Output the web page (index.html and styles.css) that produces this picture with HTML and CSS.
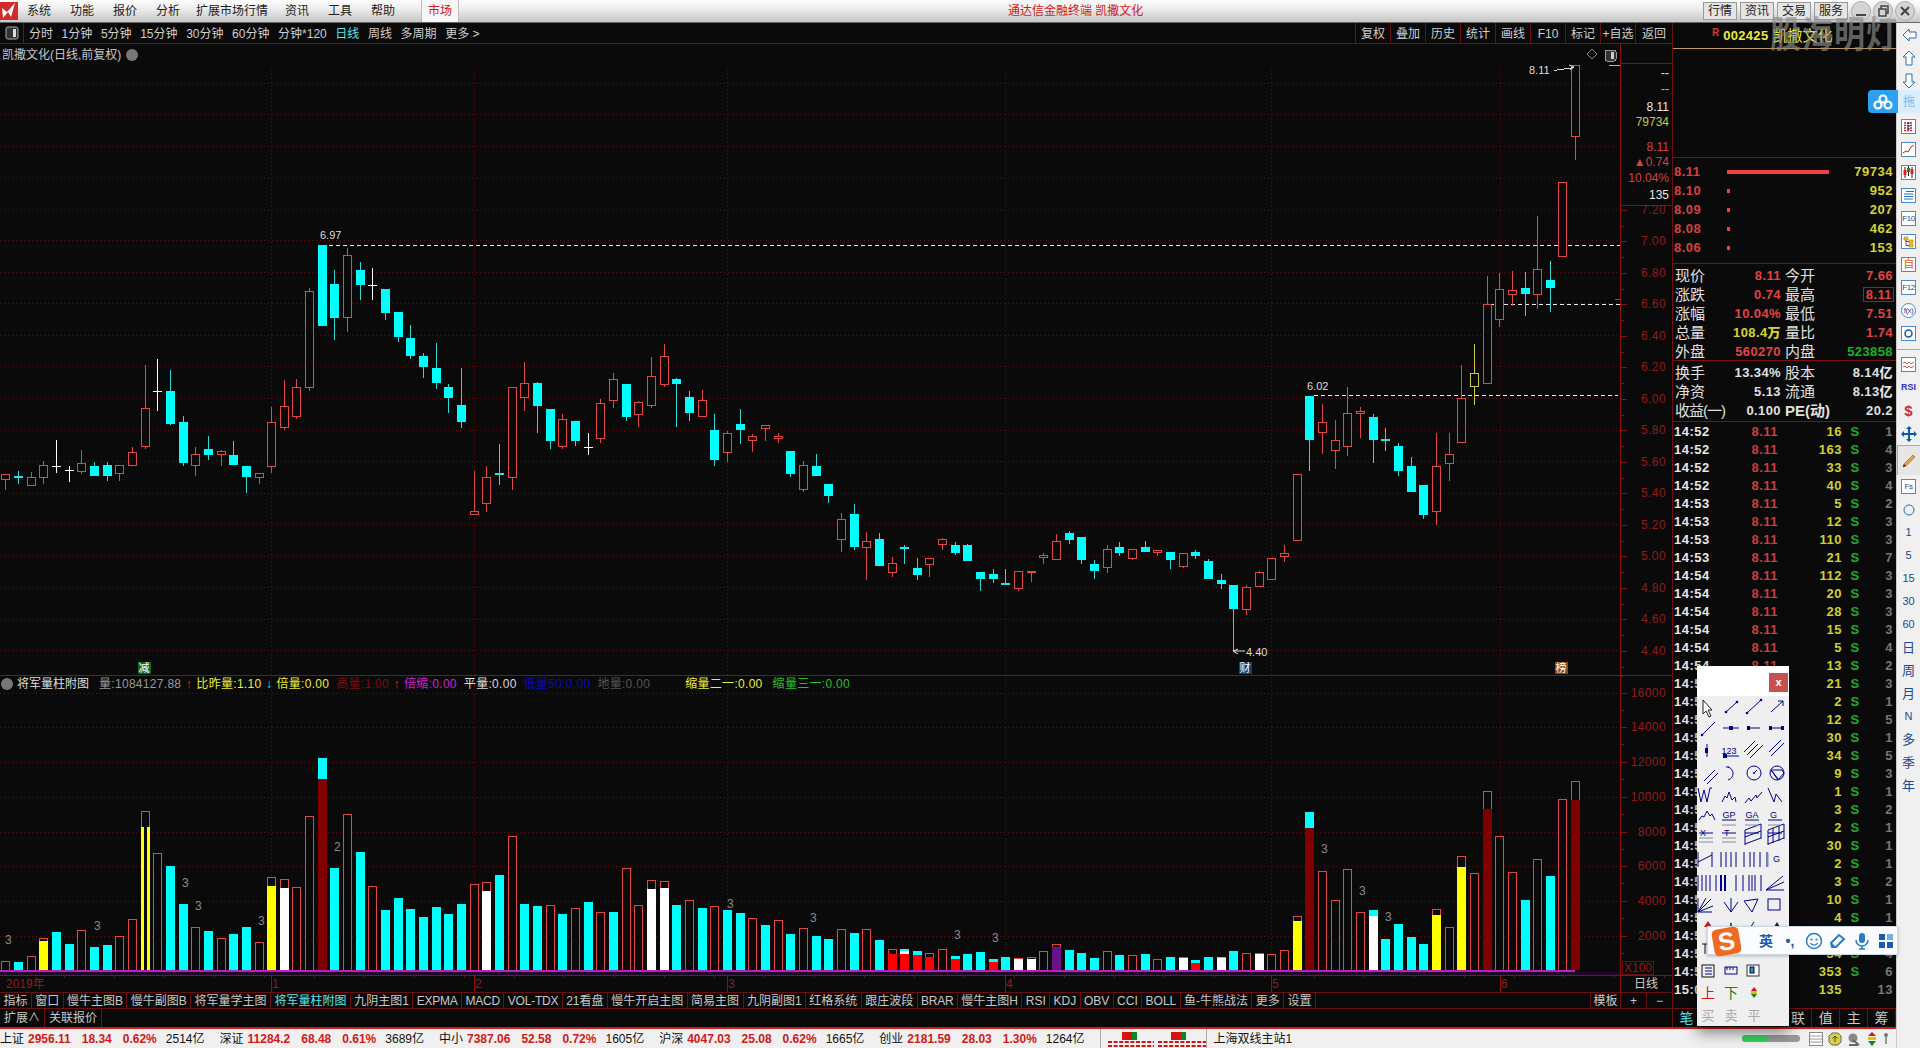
FILE: index.html
```html
<!DOCTYPE html>
<html lang="zh-CN">
<head>
<meta charset="utf-8">
<title>通达信金融终端 凯撒文化</title>
<link rel="stylesheet" href="styles.css">
</head>
<body>
<div class="app">
  <header class="titlebar">
    <svg class="logo" viewBox="0 0 18 18" width="18" height="18"><rect width="18" height="18" fill="#d42a2a"/><path d="M2 6l5 4 8-9-4 14-3-5-5 6z" fill="#fff"/></svg>
    <nav class="menu"><span>系统</span><span>功能</span><span>报价</span><span>分析</span><span class="wide-item">扩展市场行情</span><span>资讯</span><span>工具</span><span>帮助</span></nav>
    <span class="market-tab">市场</span>
    <span class="app-title">通达信金融终端 凯撒文化</span>
    <div class="title-btns"><span>行情</span><span>资讯</span><span>交易</span><span>服务</span></div>
    <div class="win-btns">
      <i><svg viewBox="0 0 20 20" width="20" height="20"><path d="M5 14h10" stroke="#444" stroke-width="2"/></svg></i>
      <i><svg viewBox="0 0 20 20" width="20" height="20"><path d="M6 8h7v7H6zM8 8V5h7v7h-2" fill="none" stroke="#444" stroke-width="1.5"/></svg></i>
      <i><svg viewBox="0 0 20 20" width="20" height="20"><path d="M6 6l8 8M14 6l-8 8" stroke="#444" stroke-width="2"/></svg></i>
    </div>
  </header>
  <div class="watermark">股海明灯</div>

  <div class="workspace">
    <div class="content">
      <div class="panes">
        <div class="left">
          <div class="toolbar">
            <span class="tb-icon"><svg viewBox="0 0 14 14" width="14" height="14"><rect x="1" y="1" width="12" height="12" rx="2" fill="#333" stroke="#aaa"/><rect x="8" y="3" width="3" height="8" fill="#ddd"/></svg></span>
            <div class="periods"><span>分时</span><span>1分钟</span><span>5分钟</span><span>15分钟</span><span>30分钟</span><span>60分钟</span><span>分钟*120</span><span class="on">日线</span><span>周线</span><span>多周期</span><span>更多 &gt;</span></div>
            <div class="tools"><span>复权</span><span>叠加</span><span>历史</span><span>统计</span><span>画线</span><span>F10</span><span>标记</span><span>+自选</span><span class="wide">返回</span></div>
          </div>
          <div class="chart">
            <svg id="chart" class="chart-svg" viewBox="0 44 1672 948" width="1672" height="948"></svg>
            <div class="chart-title">凯撒文化(日线,前复权)<i class="dot-icon"></i></div>
            <div class="legend">
              <i class="dot-icon"></i><span class="l-name">将军量柱附图</span>
              <span class="c-grey">量:1084127.88</span><b class="c-red">↑</b>
              <span class="c-yellow">比昨量:1.10</span><b class="c-cyan">↓</b>
              <span class="c-yellow">倍量:0.00</span>
              <span class="c-dred">高量:1.00</span><b class="c-red">↑</b>
              <span class="c-mag">倍缩:0.00</span>
              <span class="c-white">平量:0.00</span>
              <span class="c-blue">低量50:0.00</span>
              <span class="c-dgrey">地量:0.00</span>
              <span class="c-yellow far">缩量二一:0.00</span>
              <span class="c-green">缩量三一:0.00</span>
            </div>
          </div>
          <div class="tabs">
            <span>指标</span><span>窗口</span><span>慢牛主图B</span><span>慢牛副图B</span><span>将军量学主图</span><span class="on">将军量柱附图</span><span>九阴主图1</span><span class="latin">EXPMA</span><span class="latin">MACD</span><span class="latin">VOL-TDX</span><span>21看盘</span><span>慢牛开启主图</span><span>简易主图</span><span>九阴副图1</span><span>红格系统</span><span>跟庄波段</span><span class="latin">BRAR</span><span>慢牛主图H</span><span>RSI</span><span>KDJ</span><span>OBV</span><span>CCI</span><span>BOLL</span><span>鱼-牛熊战法</span><span>更多</span><span>设置</span>
            <div class="tabs-end"><span>模板</span><span class="pm">+</span><span class="pm">−</span></div>
          </div>
          <div class="tabs2"><span>扩展∧</span><span>关联报价</span></div>
        </div>

        <aside class="info">
          <div class="stock"><sup>R</sup><b>002425</b><span>凯撒文化</span></div>
          <div class="info-gap"></div>
          <div class="asks" id="asks"></div>
          <div class="stats">
            <span>现价</span><b class="rd">8.11</b><span>今开</span><b class="rd">7.66</b>
            <span>涨跌</span><b class="rd">0.74</b><span>最高</span><b class="rd hi">8.11</b>
            <span>涨幅</span><b class="rd">10.04%</b><span>最低</span><b class="rd">7.51</b>
            <span>总量</span><b class="yl">108.4万</b><span>量比</span><b class="rd">1.74</b>
            <span>外盘</span><b class="rd">560270</b><span>内盘</span><b class="gr">523858</b>
          </div>
          <div class="stats stats2">
            <span>换手</span><b>13.34%</b><span>股本</span><b>8.14亿</b>
            <span>净资</span><b>5.13</b><span>流通</span><b>8.13亿</b>
            <span>收益(一)</span><b>0.100</b><span>PE(动)</span><b>20.2</b>
          </div>
          <div class="trades" id="trades"></div>
          <div class="info-tabs"><span class="on">笔</span><span>价</span><span>细</span><span>势</span><span>联</span><span>值</span><span>主</span><span>筹</span></div>
        </aside>
      </div>

      <footer class="status">
        <div class="idx"><span>上证</span><b>2956.11</b><b>18.34</b><b>0.62%</b><em>2514亿</em></div>
        <div class="idx"><span>深证</span><b>11284.2</b><b>68.48</b><b>0.61%</b><em>3689亿</em></div>
        <div class="idx"><span>中小</span><b>7387.06</b><b>52.58</b><b>0.72%</b><em>1605亿</em></div>
        <div class="idx"><span>沪深</span><b>4047.03</b><b>25.08</b><b>0.62%</b><em>1665亿</em></div>
        <div class="idx"><span>创业</span><b>2181.59</b><b>28.03</b><b>1.30%</b><em>1264亿</em></div>
        <div class="meter"><svg viewBox="0 0 100 20" width="100" height="20">
          <rect x="16" y="3" width="10" height="8" fill="#d41414"/><rect x="26" y="3" width="5" height="8" fill="#0a8a1e"/>
          <rect x="65" y="3" width="10" height="8" fill="#d41414"/><rect x="75" y="3" width="5" height="8" fill="#0a8a1e"/>
          <path d="M2 13h46M2 17h46M52 13h48M52 17h48" stroke="#d41414" stroke-width="2" stroke-dasharray="4 1.6"/>
        </svg></div>
        <span class="server">上海双线主站1</span>
        <div class="status-right">
          <span class="progress"><i></i></span>
          <svg viewBox="0 0 14 14" width="14" height="14"><rect x=".5" y=".5" width="13" height="13" fill="#fff" stroke="#888"/><path d="M1 4h12M1 7h12M1 10h12" stroke="#999"/></svg>
          <svg viewBox="0 0 14 14" width="14" height="14"><path d="M4 1h6l3 3v6l-3 3H4l-3-3V4z" fill="#d8d040" stroke="#666"/><path d="M7 4v6M4.5 6.5L7 4l2.5 2.5" stroke="#444" fill="none"/></svg>
          <svg viewBox="0 0 14 14" width="14" height="14"><circle cx="6" cy="6" r="4.5" fill="#888"/><path d="M6 8l6 5M2 13h9" stroke="#666" stroke-width="2"/></svg>
          <svg viewBox="0 0 12 14" width="12" height="14"><path d="M6 0l4 4H2z" fill="#d41414"/><rect x="2" y="5" width="8" height="3" fill="#e8c000"/><path d="M6 14l4-5H2z" fill="#0a8a1e"/></svg>
          <svg viewBox="0 0 6 14" width="6" height="14"><circle cx="3" cy="3" r="2" fill="#777"/><path d="M3 5v7" stroke="#777" stroke-width="1.5"/></svg>
        </div>
      </footer>
    </div>

    <aside class="sidebar" id="sidebar">
      <span class="sb-cell"><svg viewBox="0 0 16 16" width="16" height="16"><path d="M8 2L2 8l6 6v-3h7V5H8z" fill="#fff" stroke="#2a6db0"/></svg></span>
      <span class="sb-cell"><svg viewBox="0 0 16 16" width="16" height="16"><path d="M8 1l6 6h-3v8H5V7H2z" fill="#fff" stroke="#2a6db0"/></svg></span>
      <span class="sb-cell"><svg viewBox="0 0 16 16" width="16" height="16"><path d="M8 15l6-6h-3V1H5v8H2z" fill="#fff" stroke="#2a6db0"/></svg></span>
      <span class="sb-cell"></span>
      <span class="sb-cell"><span class="sb-box"><svg viewBox="0 0 13 13" width="13" height="13"><path d="M2 3h9M2 5.500h9M2 8h9M2 10.500h9" stroke="#c22" stroke-dasharray="2 1" stroke-width="1.500"/><path d="M6.500 2v9" stroke="#14a" stroke-width="2" stroke-dasharray="2 1"/></svg></span></span>
      <span class="sb-cell"><span class="sb-box"><svg viewBox="0 0 13 13" width="13" height="13"><path d="M1 10l3-2 2 1 3-5 3-2" stroke="#c22" fill="none"/></svg></span></span>
      <span class="sb-cell"><span class="sb-box"><svg viewBox="0 0 13 13" width="13" height="13"><path d="M3 1v11M6.500 0v10M10 1v11" stroke="#222"/><rect x="1.500" y="4" width="3" height="5" fill="#d22"/><rect x="5" y="2" width="3" height="4" fill="#1a8a1a"/><rect x="8.500" y="3" width="3" height="5" fill="#d22"/></svg></span></span>
      <span class="sb-cell"><span class="sb-box"><svg viewBox="0 0 13 13" width="13" height="13"><path d="M2 5h9M2 7.500h9M2 10h9M4 2.500h8" stroke="#2a6db0"/></svg></span></span>
      <span class="sb-cell"><span class="sb-box sb-t">F10</span></span>
      <span class="sb-cell"><span class="sb-box"><svg viewBox="0 0 13 13" width="13" height="13"><path d="M2 2h4v3H2zM7 5h4v3H7zM7 9h4v3H7z" fill="#e8c040" stroke="#b08000" stroke-width=".6"/><path d="M4 5v5.500h3M4 6.500h3" stroke="#555" fill="none"/></svg></span></span>
      <span class="sb-cell"><span class="sb-box sb-t sb-o">自</span></span>
      <span class="sb-cell"><span class="sb-box sb-t">F12</span></span>
      <span class="sb-cell"><span class="sb-box sb-r sb-t">f(x)</span></span>
      <span class="sb-cell"><span class="sb-box"><svg viewBox="0 0 13 13" width="13" height="13"><circle cx="6.500" cy="6.500" r="3.500" fill="none" stroke="#1a5a9a" stroke-width="1.500"/></svg></span></span>
      <span class="sb-sep"></span>
      <span class="sb-cell"><span class="sb-box"><svg viewBox="0 0 13 13" width="13" height="13"><path d="M1 5l2-1 2 2 2-2 2 2 3-2M1 9l2-1 2 2 2-2 2 2 3-2" stroke="#c22" fill="none" stroke-width=".8"/></svg></span></span>
      <span class="sb-cell sb-rsi">RSI</span>
      <span class="sb-cell sb-dollar">$</span>
      <span class="sb-cell"><svg viewBox="0 0 16 16" width="16" height="16"><path d="M8 0l3 3H9v4h4V5l3 3-3 3V9H9v4h2l-3 3-3-3h2V9H3v2L0 8l3-3v2h4V3H5z" fill="#0a5aa8"/></svg></span>
      <span class="sb-cell sb-press"><svg viewBox="0 0 16 16" width="16" height="16"><path d="M3 11L12 2l2 2-9 9-3 1z" fill="#e8a040" stroke="#a86a10" stroke-width=".7"/><path d="M2 14l1-3 2 2z" fill="#333"/></svg></span>
      <span class="sb-cell"><span class="sb-box sb-t">Fs</span></span>
      <span class="sb-cell"><svg viewBox="0 0 16 16" width="16" height="16"><circle cx="8" cy="8" r="5" fill="none" stroke="#2a6db0"/></svg></span>
      <span class="sb-cell sb-l">1</span><span class="sb-cell sb-l">5</span><span class="sb-cell sb-l">15</span><span class="sb-cell sb-l">30</span><span class="sb-cell sb-l">60</span>
      <span class="sb-cell sb-l sb-c">日</span><span class="sb-cell sb-l sb-c">周</span><span class="sb-cell sb-l sb-c">月</span><span class="sb-cell sb-l">N</span><span class="sb-cell sb-l sb-c">多</span><span class="sb-cell sb-l sb-c">季</span><span class="sb-cell sb-l sb-c">年</span>
    </aside>
  </div>

  <div class="badge"><span class="badge-l"><svg viewBox="0 0 20 16" width="20" height="16"><g fill="none" stroke="#fff" stroke-width="2.200"><circle cx="10" cy="5" r="3.500"/><circle cx="5" cy="11" r="3.500"/><circle cx="15" cy="11" r="3.500"/></g></svg></span><span class="badge-r">拖</span></div>

  <div class="draw-panel">
    <div class="draw-head"><span class="draw-close">x</span></div>
    <svg class="draw-icons" viewBox="1697 696 92 330" width="92" height="330">
      <g class="ic">
        <path class="cur" d="M1703 700v14l3-3 3 6 2-1-3-6h4z"/>
        <path d="M1726 712l11-10M1747 713l14-13M1771 712l12-11M1778 701h5v5"/>
        <path d="M1702 735l13-13M1723 728h16M1747 728h13M1770 728h14"/>
        <path d="M1707 744v13M1725 756h14M1747 755l11-11M1750 758l13-13M1744 752l11-11M1771 756l13-13M1769 752l12-12M1704 781l11-11M1707 784l11-11"/>
        <path d="M1728 767a8 7 0 0 1 0 13M1726 767h3"/>
        <circle cx="1754" cy="773" r="7"/><path d="M1754 773l3-3"/>
        <circle cx="1777" cy="773" r="7"/><path d="M1771 770h11l2 3-6 7zM1771 770l8 10"/>
        <path d="M1698 788l3 14 3-12 3 12 3-14 2 0M1722 802l3-6 2 2 2-6 3 8 3-3 1 5M1745 803l4-5 2 3 5-6 1 3 5-6M1768 788l6 14 2-8 6 8"/>
        <path d="M1699 820l3-4 2 1 3-6 3 5 2-2 3 6M1722 820h14M1745 820h14M1768 820h14"/>
        <path d="M1699 833h14M1722 833h14M1745 833h14M1768 833h14M1745 830l16-6M1745 837l16-6M1745 844l16-6M1745 830v15M1761 824v15M1768 830l16-6M1768 837l16-6M1768 844l16-6M1768 830v15M1773 828v15M1779 826v15M1784 824v15"/>
        <path d="M1698 852v15M1712 852v15M1698 862l14-7M1721 852v15M1726 852v15M1731 852v15M1736 852v15M1744 852v15M1750 852v15M1754 852v15M1760 852v15M1767 852v15"/>
        <path d="M1698 875v16M1702 875v16M1706 875v16M1710 875v16M1716 875v16M1736 875v16M1743 875v16M1749 875v16M1752 875v16M1755 875v16M1761 875v16M1766 890l17-14M1766 890l18-8M1766 890h18"/>
        <path class="thick" d="M1721 875v16M1725 875v16"/>
        <path d="M1698 898v14h14M1698 912l13-13M1698 912l15-6M1698 912l8-14M1724 902l7 10 7-10M1731 912v-14M1744 901l14-2-6 13z"/>
        <rect x="1768" y="899" width="12" height="11"/>
      </g>
      <g class="gl">
        <path d="M1722 825h14M1745 825h14M1768 825h14M1699 838h14M1699 842h14M1722 838h14M1722 842h14"/>
        <path d="M1768 853v14"/>
        <text x="1729" y="754" text-anchor="middle" class="t7">123</text>
        <text x="1729" y="818" text-anchor="middle" class="t7">GP</text>
        <text x="1752" y="818" text-anchor="middle" class="t7">GA</text>
        <text x="1770" y="818" class="t7">G</text>
        <text x="1700" y="836" class="t7">X</text>
        <text x="1724" y="836" class="t7">T</text>
        <text x="1773" y="862" class="t7">G</text>
      </g>
      <g class="dots"><circle cx="1726" cy="712" r="1.300"/><circle cx="1737" cy="702" r="1.300"/><circle cx="1747" cy="713" r="1.300"/><circle cx="1761" cy="700" r="1.300"/><circle cx="1702" cy="735" r="1.300"/><rect x="1729" y="726" width="4" height="4"/><rect x="1747" y="726" width="3" height="4"/><rect x="1769" y="726" width="3" height="4"/><rect x="1781" y="726" width="3" height="4"/><rect x="1705" y="748" width="3" height="5"/><rect x="1723" y="754" width="4" height="4"/><circle cx="1754" cy="773" r="1"/></g>
      <path d="M1708 921l4 6h-8z" fill="#d41414"/><path d="M1731 923v5" stroke="#0a8a1e" stroke-width="2"/><path d="M1754 922l-4 6" stroke="#00008b"/><path d="M1777 922l3 5h-6z" fill="#222"/>
      <path d="M1702 944h5M1705 944v10" stroke="#111"/>
      <g class="ic">
        <rect x="1702" y="965" width="12" height="12" stroke="#111"/><path d="M1705 968h7M1705 971h7M1705 974h7"/>
        <rect x="1725" y="967" width="12" height="7"/><path d="M1727 967v3M1730 967v3M1733 967v3"/>
        <rect x="1747" y="965" width="12" height="11" fill="#fff" stroke="#333"/><rect x="1750" y="967" width="4" height="6" fill="#2a9a6a"/>
      </g>
      <text x="1708" y="998" text-anchor="middle" class="t-up">上</text>
      <text x="1731" y="998" text-anchor="middle" class="t-dn">下</text>
      <path d="M1754 987l3 4h-6z" fill="#d41414"/><rect x="1751" y="991" width="6" height="3" fill="#e8c000"/><path d="M1754 998l3-4h-6z" fill="#0a8a1e"/>
      <text x="1708" y="1020" text-anchor="middle" class="t-off">买</text>
      <text x="1731" y="1020" text-anchor="middle" class="t-off">卖</text>
      <text x="1754" y="1020" text-anchor="middle" class="t-off">平</text>
    </svg>
  </div>

  <div class="ime">
    <span class="ime-logo">S</span>
    <span class="ime-en">英</span>
    <span class="ime-pun">•,</span>
    <svg viewBox="0 0 18 18" width="18" height="18"><circle cx="9" cy="9" r="7.500" fill="none" stroke="#2a7cc8" stroke-width="1.500"/><circle cx="6.500" cy="7.500" r="1.100" fill="#2a7cc8"/><circle cx="11.500" cy="7.500" r="1.100" fill="#2a7cc8"/><path d="M5.500 11a4 4 0 0 0 7 0" fill="none" stroke="#2a7cc8" stroke-width="1.300"/></svg>
    <svg viewBox="0 0 18 18" width="18" height="18"><path d="M2 11l8-8 5 4-8 8H3z" fill="none" stroke="#2a7cc8" stroke-width="2"/><path d="M3 11l4 4-4 0z" fill="#2a7cc8"/></svg>
    <svg viewBox="0 0 18 18" width="18" height="18"><rect x="6" y="1" width="6" height="10" rx="3" fill="#2a7cc8"/><path d="M3 8a6 6 0 0 0 12 0M9 14v3M6 17h6" fill="none" stroke="#2a7cc8" stroke-width="1.500"/></svg>
    <svg viewBox="0 0 18 18" width="18" height="18"><rect x="2" y="2" width="6" height="6" fill="#1a5ab0"/><rect x="10" y="2" width="6" height="6" fill="#7ab0e0"/><rect x="2" y="10" width="6" height="6" fill="#1a5ab0"/><rect x="10" y="10" width="6" height="6" fill="#1a5ab0"/></svg>
  </div>
</div>
<script src="script.js"></script>
</body>
</html>
```

FILE: styles.css
```css
* { box-sizing: border-box; }
html, body { margin: 0; padding: 0; }
body {
  width: 1920px; height: 1048px; overflow: hidden; background: #0a0a0a; color: #ccc;
  font: 12px/1 "Liberation Sans", "Noto Sans CJK SC", sans-serif;
}
.app { position: relative; width: 1920px; height: 1048px; display: flex; flex-direction: column; }

.titlebar {
  height: 23px; display: flex; align-items: center; color: #222; position: relative;
  background: linear-gradient(#fdfdfd, #f2f2f2 30%, #c6c6c6); border-bottom: 1px solid #666;
}
.logo { margin-left: 0; flex: none; }
.menu { display: flex; gap: 19px; margin-left: 9px; }
.menu .wide-item { margin-left: -3px; margin-right: -2px; }
.market-tab {
  margin-left: 26px; width: 38px; height: 22px; display: flex; align-items: center; justify-content: center;
  color: #d01818; background: #f6f6f6; border-left: 1px solid #bbb; border-right: 1px solid #bbb;
}
.app-title { position: absolute; left: 1008px; top: 5px; color: #d01818; }
.title-btns { margin-left: auto; display: flex; gap: 3px; margin-right: 3px; }
.title-btns span {
  width: 34px; height: 18px; display: flex; align-items: center; justify-content: center;
  background: #e4e4e4; border: 1px solid #999;
}
.win-btns { display: flex; gap: 2px; margin-right: 5px; }
.win-btns i { width: 20px; height: 20px; border-radius: 50%; background: #d4d4d4; border: 1px solid #aaa; display: block; overflow: hidden; }
.win-btns svg { display: block; margin: -1px; }
.watermark {
  position: absolute; left: 1770px; top: 20px; font-size: 31px; font-weight: 700; letter-spacing: 1px;
  color: rgba(140, 140, 140, .68); z-index: 8; pointer-events: none; white-space: nowrap;
  transform: scaleY(1.2);
}

.workspace { flex: 1; display: flex; min-height: 0; }
.content { width: 1896px; display: flex; flex-direction: column; }
.panes { height: 1004px; display: flex; }
.left { width: 1672px; display: flex; flex-direction: column; }

.toolbar {
  height: 21px; display: flex; align-items: center; border-bottom: 1px solid #7a1010; background: #0a0a0a; color: #cfcfcf;
}
.tb-icon { width: 24px; height: 20px; display: flex; align-items: center; justify-content: center; border-right: 1px solid #7a1010; }
.periods { display: flex; gap: 8.6px; margin-left: 5px; white-space: nowrap; padding-top: 2px; }
.periods .on { color: #55e8f0; }
.tools { margin-left: auto; display: flex; height: 20px; }
.tools span {
  width: 35px; display: flex; align-items: center; justify-content: center; border-left: 1px solid #6a1010; white-space: nowrap; padding-top: 2px;
}
.tools .wide { width: 37px; }

.chart { position: relative; height: 948px; }
.chart-svg { display: block; }
.chart-title { position: absolute; left: 2px; top: 5px; color: #c8c8c8; display: flex; align-items: center; gap: 5px; font-size: 12px; }
.dot-icon { display: block; width: 12px; height: 12px; border-radius: 50%; background: #777; flex: none; }
.legend { position: absolute; left: 1px; top: 634px; display: flex; align-items: center; white-space: nowrap; font-size: 12px; letter-spacing: .3px; }
.legend span { margin-right: 7px; }
.legend b { width: 15px; margin-left: -7px; text-align: center; font-weight: 400; letter-spacing: 0; }
.legend .dot-icon { margin-right: 4px; }
.legend .l-name { margin-right: 10px; letter-spacing: 0; }
.legend .far { margin-left: 28px; margin-right: 10px; }
.l-name { color: #ddd; }
.c-grey { color: #999; } .c-red { color: #e03030; } .c-yellow { color: #ecec3c; } .c-cyan { color: #3ce8f0; }
.c-dred { color: #7a0d0d; } .c-mag { color: #d020d0; } .c-white { color: #ddd; } .c-blue { color: #0a0ab8; }
.c-dgrey { color: #555; } .c-green { color: #28c028; }

.tabs { height: 16px; display: flex; align-items: stretch; border-top: 1px solid #6a1010; color: #c8c8c8; white-space: nowrap; }
.tabs > span { padding: 0 3.4px; display: flex; align-items: center; border-right: 1px solid #6a1010; }
.tabs .on { color: #55e8f0; }
.tabs .latin { letter-spacing: -.2px; }
.tabs-end { margin-left: auto; display: flex; }
.tabs-end span { display: flex; align-items: center; justify-content: center; border-left: 1px solid #6a1010; padding: 0 3px; width: 30px; }
.tabs-end .pm { width: 26px; }
.tabs2 { height: 19px; display: flex; border-top: 1px solid #6a1010; color: #c8c8c8; }
.tabs2 span { padding: 0 4px; display: flex; align-items: center; border-right: 1px solid #6a1010; }

.info { width: 224px; display: flex; flex-direction: column; border-left: 1px solid #6a1010; font-weight: 700; overflow: hidden; }
.stock { height: 26px; display: flex; align-items: center; border-bottom: 1px solid #c09a50; padding-left: 39px; font-weight: 400; }
.stock sup { color: #e03030; font-size: 10px; font-weight: 700; margin-right: 4px; align-self: flex-start; margin-top: 5px; }
.stock b { color: #ecec3c; font-size: 13px; letter-spacing: .3px; margin-right: 4px; }
.stock span { color: #ecec3c; font-size: 15px; }
.info-gap { height: 109px; border-bottom: 1px solid #7a1010; }
.asks { height: 106px; padding-top: 4px; border-bottom: 1px solid #7a1010; }
.ask { height: 19px; display: flex; align-items: center; font-size: 13px; letter-spacing: .5px; padding: 0 3px 0 1px; }
.ask b { color: #d84040; width: 53px; }
.ask i { display: block; height: 4px; background: #f04040; }
.ask em { margin-left: auto; color: #d4d434; font-style: normal; }
.stats {
  height: 97px; padding: 2px 3px 0 2px; display: grid; grid-template-columns: 30px 76px 1fr 54px; grid-auto-rows: 19px;
  align-items: center; border-bottom: 1px solid #7a1010; font-size: 13px; letter-spacing: .4px; color: #e0e0e0;
}
.stats span { font-weight: 400; font-size: 15px; letter-spacing: 0; white-space: nowrap; }
.stats b { text-align: right; white-space: nowrap; }
.stats span:nth-child(4n+3) { padding-left: 4px; }
.stats2 { height: 61px; padding-top: 2px; }
.stats2 span:nth-child(1) ~ span { font-size: 15px; }
.stats2 b:nth-child(10) { margin-left: -20px; }
.stats2 span:nth-child(9) { font-size: 14px; letter-spacing: -1px; }
.stats2 span:nth-child(11) { font-size: 13px; font-weight: 700; letter-spacing: 0; }
.rd { color: #e04444; } .yl { color: #d4d434; } .gr { color: #18b028; }
.hi { justify-self: end; outline: 1px solid #444; padding: 0 1px 0 2px; }
.trades { flex: 1; min-height: 0; }
.trade {
  height: 18px; display: grid; grid-template-columns: 40px 64px 64px 22px 1fr; align-items: center;
  font-size: 13px; letter-spacing: .5px; padding: 0 3px 0 1px;
}
.trade u { text-decoration: none; color: #e8e8e8; }
.trade b { text-align: right; }
.trade .p { color: #c84040; }
.trade .v { color: #d0d030; }
.trade .s { color: #18b028; text-align: center; padding-left: 4px; }
.trade .n { color: #777; }
.info-tabs { height: 19px; display: flex; border-top: 1px solid #7a1010; font-weight: 400; font-size: 14px; }
.info-tabs span { flex: 1; display: flex; align-items: center; justify-content: center; border-right: 1px solid #6a1010; color: #c8c8c8; }
.info-tabs .on { color: #55e8f0; }

.status {
  height: 21px; display: flex; align-items: center; background: #f0f0f0; border-top: 2px solid #d01818; color: #111; white-space: nowrap;
}
.idx { display: flex; align-items: center; margin-right: 15px; }
.idx span { margin-right: 4px; }
.idx b { color: #d01818; margin-right: 11px; }
.idx em { font-style: normal; margin-left: -2px; }
.meter { width: 107px; height: 19px; border-left: 1px solid #aaa; border-right: 1px solid #aaa; padding-left: 5px; }
.meter svg { display: block; }
.server { margin-left: 7px; }
.status-right { margin-left: auto; display: flex; align-items: center; gap: 5px; padding-right: 7px; }
.progress { display: block; width: 58px; height: 7px; border-radius: 4px; background: #999; overflow: hidden; margin-right: 4px; }
.progress i { display: block; width: 45%; height: 7px; background: #38d060; }

.sidebar { width: 24px; background: #f0f0f0; border-left: 1px solid #ccc; display: flex; flex-direction: column; overflow: hidden; }
.sb-cell { height: 23px; flex: none; display: flex; align-items: center; justify-content: center; color: #1a5ab0; }
.sb-box {
  width: 15px; height: 15px; border: 1px solid #4a8ac8; background: #fff; display: flex; align-items: center; justify-content: center; overflow: hidden;
}
.sb-box svg { display: block; }
.sb-t { font-size: 8px; letter-spacing: -.5px; color: #1a4a90; }
.sb-o { color: #e06010; font-size: 11px; }
.sb-r { border-radius: 50%; }
.sb-sep { height: 8px; flex: none; display: flex; align-items: center; }
.sb-sep::before { content: ""; display: block; width: 100%; height: 1px; background: #aaa; }
.sb-rsi { font-size: 9px; font-weight: 700; color: #3030c0; }
.sb-dollar { font-size: 15px; font-weight: 700; color: #c03030; }
.sb-press { height: 30px; background: #e6e6e6; border-top: 1px solid #aaa; border-left: 1px solid #aaa; }
.sb-l { font-size: 11px; color: #1a4a90; }
.sb-c { font-size: 13px; }

.badge { position: absolute; left: 1868px; top: 90px; width: 52px; height: 23px; display: flex; border-radius: 4px 0 0 4px; overflow: hidden; z-index: 9; }
.badge-l { width: 30px; background: #2ea0f0; display: flex; align-items: center; justify-content: center; }
.badge-r { flex: 1; background: #d8eeff; color: #70b8f0; display: flex; align-items: center; justify-content: center; font-size: 12px; }

.draw-panel { position: absolute; left: 1697px; top: 666px; width: 92px; height: 360px; background: #efefef; box-shadow: 0 6px 14px rgba(0, 0, 0, .5); z-index: 5; display: flex; flex-direction: column; }
.draw-head { height: 30px; background: #fff; position: relative; flex: none; }
.draw-close { position: absolute; right: 1px; top: 7px; width: 19px; height: 19px; background: #c75050; color: #fff; font-weight: 700; font-size: 11px; display: flex; align-items: center; justify-content: center; }
.draw-icons { display: block; }
.ic { fill: none; stroke: #00008b; stroke-width: 1; }
.ic .cur { fill: #fff; stroke: #222; }
.ic .thick { stroke-width: 2; }
.gl { fill: none; stroke: #8a8a9a; }
.gl text { fill: #00008b; stroke: none; }
.t7 { font: 9px "Liberation Sans", sans-serif; }
.dots { fill: #00008b; }
.t-up { font: 14px "Noto Sans CJK SC", sans-serif; fill: #d41414; }
.t-dn { font: 14px "Noto Sans CJK SC", sans-serif; fill: #0a8a1e; }
.t-off { font: 13px "Noto Sans CJK SC", sans-serif; fill: #aaa; }

.ime {
  position: absolute; left: 1707px; top: 926px; width: 191px; height: 29px; background: #fafcff; border: 1px solid #ccd8e4;
  box-shadow: 0 1px 3px rgba(0, 0, 0, .25); z-index: 7; display: flex; align-items: center; gap: 6px; padding-left: 51px;
}
.ime-logo {
  position: absolute; left: 5px; top: 1px; width: 27px; height: 27px; border-radius: 5px; background: #ee6a22; color: #fff;
  font-size: 25px; font-weight: 700; display: flex; align-items: center; justify-content: center; transform: rotate(-10deg);
}
.ime-en { color: #1a5ab0; font-size: 14px; font-weight: 700; width: 16px; }
.ime-pun { color: #1a5ab0; font-size: 14px; font-weight: 700; width: 18px; text-align: center; }

.chart-svg text { font-family: "Liberation Sans", "Noto Sans CJK SC", sans-serif; font-size: 12px; }
.chart-svg .ax { fill: #8f1c1c; text-anchor: end; letter-spacing: .4px; }
.chart-svg .tx { fill: #8f1c1c; }
.chart-svg .lab { fill: #ddd; font-size: 11px; }
.chart-svg .num { fill: #8a8a8a; }
.chart-svg .q1 { fill: #e8e8e8; text-anchor: end; }
.chart-svg .q2 { fill: #c8c840; text-anchor: end; }
.chart-svg .q3 { fill: #d84040; text-anchor: end; }
.chart-svg .tag { fill: #fff; text-anchor: middle; font-size: 11px; }
.chart-svg .day { fill: #ccc; text-anchor: middle; }
.chart-svg rect, .chart-svg line { shape-rendering: crispEdges; }
```

FILE: script.js
```js
var K = [
["r",474,474,480,490],["c",471,476,476,484],["r",472,477,486,486],["r",461,465,478,484],["w",440,466,466,473],
["w",466,470,470,482],["r",450,463,472,474],["c",462,466,476,476],["c",462,465,476,481],["r",465,465,474,481],
["r",447,452,466,466],["r",365,408,447,449],["w",359,391,391,411],["c",370,391,424,425],["c",416,422,463,466],
["r",447,454,466,476],["c",436,449,455,460],["r",450,451,455,466],["c",441,455,465,465],["c",466,466,477,493],
["r",473,473,478,484],["r",407,422,467,473],["r",380,406,428,430],["r",379,387,417,419],["r",288,291,388,391],
["c",245,245,326,326],["c",270,284,318,340],["r",248,255,318,332],["c",262,270,285,300],["w",268,285,285,300],
["c",289,289,313,320],["c",312,312,337,342],["c",325,338,356,359],["c",353,356,367,378],["c",343,368,383,389],
["c",384,387,398,413],["c",368,405,422,428],["r",471,511,515,515],["r",466,477,504,512],["c",444,473,473,485],
["r",387,387,478,490],["r",362,383,398,411],["c",382,383,406,433],["c",409,409,441,449],["r",414,419,447,449],
["c",421,421,441,446],["w",433,447,447,455],["r",399,403,439,443],["r",373,379,401,408],["c",384,384,417,421],
["r",401,402,415,427],["r",357,376,406,408],["r",344,356,385,387],["c",378,379,384,427],["c",391,397,413,421],
["r",390,400,417,417],["c",414,430,460,466],["r",431,433,453,462],["c",409,424,430,444],["r",434,436,441,452],
["r",425,425,429,441],["r",433,436,439,443],["c",451,451,474,477],["r",461,465,490,492],["c",454,466,476,476],
["c",484,484,496,503],["r",513,519,540,552],["c",504,514,547,550],["r",532,541,548,580],["c",533,539,566,566],
["r",557,563,573,577],["c",545,547,549,564],["c",558,568,575,580],["r",558,558,565,577],["r",538,539,545,550],
["c",542,545,553,555],["c",544,545,561,561],["c",572,572,579,591],["c",569,574,579,583],["c",569,583,583,585],
["r",571,571,589,591],["r",571,571,572,582],["r",553,555,558,564],["r",534,541,560,560],["c",531,533,540,544],
["c",537,537,560,564],["c",560,564,571,579],["r",545,549,568,573],["c",542,547,553,556],["r",549,549,559,560],
["c",541,547,552,552],["r",550,550,553,556],["c",552,552,560,569],["r",553,553,567,568],["c",550,552,556,559],
["c",559,561,579,579],["c",574,580,584,589],["c",585,585,609,650],["r",585,587,610,615],["r",571,572,587,587],
["r",558,558,580,580],["r",545,553,557,562],["r",474,474,541,541],["c",396,396,440,471],["r",404,422,433,454],
["r",420,440,451,469],["r",387,413,447,456],["r",407,411,414,438],["c",414,417,440,463],["c",428,439,439,451],
["c",443,446,471,476],["c",457,466,492,492],["c",485,485,515,519],["r",433,466,512,525],["r",433,454,464,481],
["r",365,398,443,443],["y",344,373,387,405],["r",276,304,384,384],["r",273,289,320,327],["r",271,290,295,306],
["c",272,288,294,316],["r",216,269,295,309],["c",261,280,288,312],["r",182,182,257,257],["r",65,65,137,160]
];
var V = "o961 c962 o956 o938,y941 c932 c944 o930 c947 c945 o936 o919 o811,s827 o853 c866 c904 o927 c931 o938 c934 c927 o942 o877,y886 o879,w888 o887 o816 c758,D779 c868 o814 c852 o886 c910 c898 c909 c917 c907 c914 c904 o884 o882,w891 c875 o836 c904 c906 o905 c914 o908 c902 o912 c912 o868 o905 o880,w889 o881,w888 c905 o900 c908 o906 c910 c913 o918 c925 o920 c934 o928 c936 c939 o929 c933 o929 c940 o949,R954 c949,w951,R954 c951,R955 o953,R957 o949 c956,R959 c954 c952 c959,R962 c957 o958,w959 o957,w959 o951 o944,p947 c950 c953 c958 o951 c955 o955 c954 o959 c957 o957,w958 c960,R963 c957 c957,w958 c951 o953 o953,w954 o954 o950 o916,y921 c812,D828 o871 o900 o869 o912 c910,w916 c939 c924 c937 c944 o909,y915 o927 o856,y867 o873 o791,D809 o836 o872 c900 o859 c876 o799 o781,D800".split(" ");
var COL = { c: "#00ffff", y: "#ffff00", w: "#ffffff", D: "#800000", R: "#ff0000", p: "#6a108a" };
var RED = "#e04848", s = [];

function rect(x, y, w, h, f) { s.push('<rect x="' + x + '" y="' + y + '" width="' + w + '" height="' + Math.max(h, 1) + '" fill="' + f + '"/>'); }
function line(x1, y1, x2, y2, c, extra) { s.push('<line x1="' + x1 + '" y1="' + y1 + '" x2="' + x2 + '" y2="' + y2 + '" stroke="' + c + '"' + (extra || "") + '/>'); }
function text(x, y, cls, t) { s.push('<text x="' + x + '" y="' + y + '" class="' + cls + '">' + t + "</text>"); }
function outline(x, y, w, h, c) { s.push('<rect x="' + (x + .5) + '" y="' + (y + .5) + '" width="' + (w - 1) + '" height="' + Math.max(h - 1, 1) + '" fill="#0a0a0a" stroke="' + c + '"/>'); }

var GRID = "#5a1414", AX = "#8a1010", DOT = ' stroke-dasharray="1 3"';
// horizontal dotted grids
for (var k = 0; k <= 18; k++) { var gy = Math.round(82.5 + 31.55 * k) + .5; line(0, gy, 1620, gy, GRID, DOT); }
for (k = 0; k <= 7; k++) { gy = Math.round(692.7 + 34.7 * k) + .5; line(0, gy, 1620, gy, GRID, DOT); }
[271, 474, 727, 1005, 1271, 1500].forEach(function (x) { line(x + .5, 70, x + .5, 970, GRID, DOT); });

// main frame
line(1620.5, 44, 1620.5, 992, AX);
line(0, 675.5, 1672, 675.5, "#8a1010");
line(0, 975.5, 1672, 975.5, "#8a1010");
line(1620, 63.5, 1672, 63.5, AX);
line(1620, 205.5, 1672, 205.5, AX);
line(1609, 65.5, 1620, 65.5, "#c8c840");

// reference lines
line(322, 245.5, 1620, 245.5, "#eee", ' stroke-dasharray="4 3"');
line(1490, 304.5, 1620, 304.5, "#eee", ' stroke-dasharray="4 3"');
line(1314, 395.5, 1618, 395.5, "#eee", ' stroke-dasharray="4 3"');
line(1615, 299.5, 1620, 299.5, "#1a9a1a");

// candles
K.forEach(function (d, i) {
  var c = Math.round(5.3 + 12.66 * i), t = d[0], col = t === "r" ? RED : t === "c" ? "#00ffff" : t === "w" ? "#fff" : "#c8c840";
  rect(c, d[1], 1, d[4] - d[1], t === "c" ? "#30d8d8" : col);
  if (t === "c") {
    if (d[3] - d[2] < 2) rect(c - 4, d[2], 9, 2, "#30e0e0"); else rect(c - 4, d[2], 9, d[3] - d[2], col);
  } else if (t === "w") {
    rect(c - 4, d[2], 9, 1, col);
  } else if (d[3] - d[2] < 2) {
    rect(c - 4, d[2], 9, 2, col);
  } else {
    outline(c - 4, d[2], 9, d[3] - d[2], col);
  }
});

// volume bars
V.forEach(function (str, i) {
  var c = Math.round(5.3 + 12.66 * i), parts = str.split(",");
  parts.forEach(function (p, j) {
    var k = p.charAt(0), top = +p.slice(1), end = j + 1 < parts.length ? +parts[j + 1].slice(1) : 970;
    if (k === "o") outline(c - 4, top, 9, end - top + 1, RED);
    else if (k === "s") { rect(c - 4, top, 9, end - top, "#ffff00"); rect(c - 1, top, 3, end - top, "#0a0a0a"); }
    else rect(c - 4, top, 9, end - top, COL[k]);
  });
});
rect(0, 970, 1575, 2, "#b820c0");
rect(0, 972, 1620, 3, "#22062a");

// markers in the sub chart
[[8, 944, "3"], [97, 930, "3"], [185, 887, "3"], [198, 910, "3"], [261, 925, "3"], [337, 851, "2"], [730, 908, "3"], [813, 922, "3"], [957, 939, "3"], [995, 942, "3"], [1324, 853, "3"], [1362, 895, "3"], [1388, 921, "3"]].forEach(function (n) {
  text(n[0] - 3, n[1], "num", n[2]);
});

// price labels
text(320, 239, "lab", "6.97");
text(1307, 390, "lab", "6.02");
text(1529, 74, "lab", "8.11");
text(1246, 656, "lab", "4.40");
line(1554, 70.5, 1574, 67.5, "#ddd");
s.push('<path d="M1569 65l5 2-4 3M1238 649l-5 2 5 3M1233 651h12" fill="none" stroke="#ddd"/>');

// event tags
[[144, "#0a6a24", "减"], [1245, "#14407a", "财"], [1561, "#8a4a14", "榜"]].forEach(function (t) {
  rect(t[0] - 6, 662, 13, 12, t[1]);
  text(t[0], 672, "tag", t[2]);
});

// chart icons
s.push('<path d="M1592 49l5 5-5 5-5-5z" fill="none" stroke="#888"/><rect x="1605" y="50" width="11" height="11" rx="2" fill="#333" stroke="#999"/><rect x="1611" y="52" width="3" height="7" fill="#ccc"/>');

// right axis: quote block
[["q1", 77, "--"], ["q2", 93, "--"], ["q1", 111, "8.11"], ["q2", 126, "79734"], ["q3", 151, "8.11"], ["q3", 166, "▲0.74"], ["q3", 182, "10.04%"], ["q1", 199, "135"]].forEach(function (q) { text(1669, q[1], q[0], q[2]); });

// right axis: price scale
for (k = 0; k < 15; k++) {
  var ly = Math.round(209.6 + 31.5 * k);
  text(1666, ly + 4, "ax", (7.2 - 0.2 * k).toFixed(2));
  line(1620, ly + .5, 1627, ly + .5, AX);
  line(1620, ly + 16.5, 1624, ly + 16.5, AX);
}
// right axis: volume scale
for (k = 0; k < 8; k++) {
  ly = Math.round(692.7 + 34.7 * k);
  text(1666, ly + 4, "ax", 16000 - 2000 * k);
  line(1620, ly + .5, 1627, ly + .5, AX);
  line(1620, ly + 17.5, 1624, ly + 17.5, AX);
}
rect(1621, 676, 2, 1, AX);
outline(1622, 961, 32, 14, "#6a1010");
text(1624, 972, "tx", "X100");
text(1646, 988, "day", "日线");

// time axis
text(6, 988, "tx", "2019年");
[[271, "1"], [474, "2"], [727, "3"], [1005, "4"], [1271, "5"], [1500, "6"]].forEach(function (t) {
  line(t[0] + .5, 975, t[0] + .5, 992, AX);
  text(t[0] + 1, 988, "tx", t[1]);
});
for (k = 0; k < 33; k++) { var tx = 64 + k * 50; line(tx + .5, 975, tx + .5, 978, "#5a1414"); }

document.getElementById("chart").innerHTML = s.join("");

// order book
var asks = [["8.11", "79734", 102], ["8.10", "952", 3], ["8.09", "207", 3], ["8.08", "462", 3], ["8.06", "153", 3]];
document.getElementById("asks").innerHTML = asks.map(function (a) {
  return '<div class="ask"><b>' + a[0] + '</b><i style="width:' + a[2] + 'px"></i><em>' + a[1] + "</em></div>";
}).join("");

// tick list
var T = [["14:52",16,1],["14:52",163,4],["14:52",33,3],["14:52",40,4],["14:53",5,2],["14:53",12,3],["14:53",110,3],["14:53",21,7],["14:54",112,3],["14:54",20,3],["14:54",28,3],["14:54",15,3],["14:54",5,4],["14:54",13,2],["14:54",21,3],["14:55",2,1],["14:55",12,5],["14:55",30,1],["14:55",34,5],["14:55",9,3],["14:55",1,1],["14:56",3,2],["14:56",2,1],["14:56",30,1],["14:56",2,1],["14:56",3,2],["14:56",10,1],["14:56",4,1],["14:56",7,1],["14:56",34,4],["14:56",353,6],["15:00",135,13]];
document.getElementById("trades").innerHTML = T.map(function (r, i) {
  return '<div class="trade"><u>' + r[0] + '</u><b class="p">8.11</b><b class="v">' + r[1] + '</b><b class="s">' + (i === 31 ? "" : "S") + '</b><b class="n">' + r[2] + "</b></div>";
}).join("");
```
